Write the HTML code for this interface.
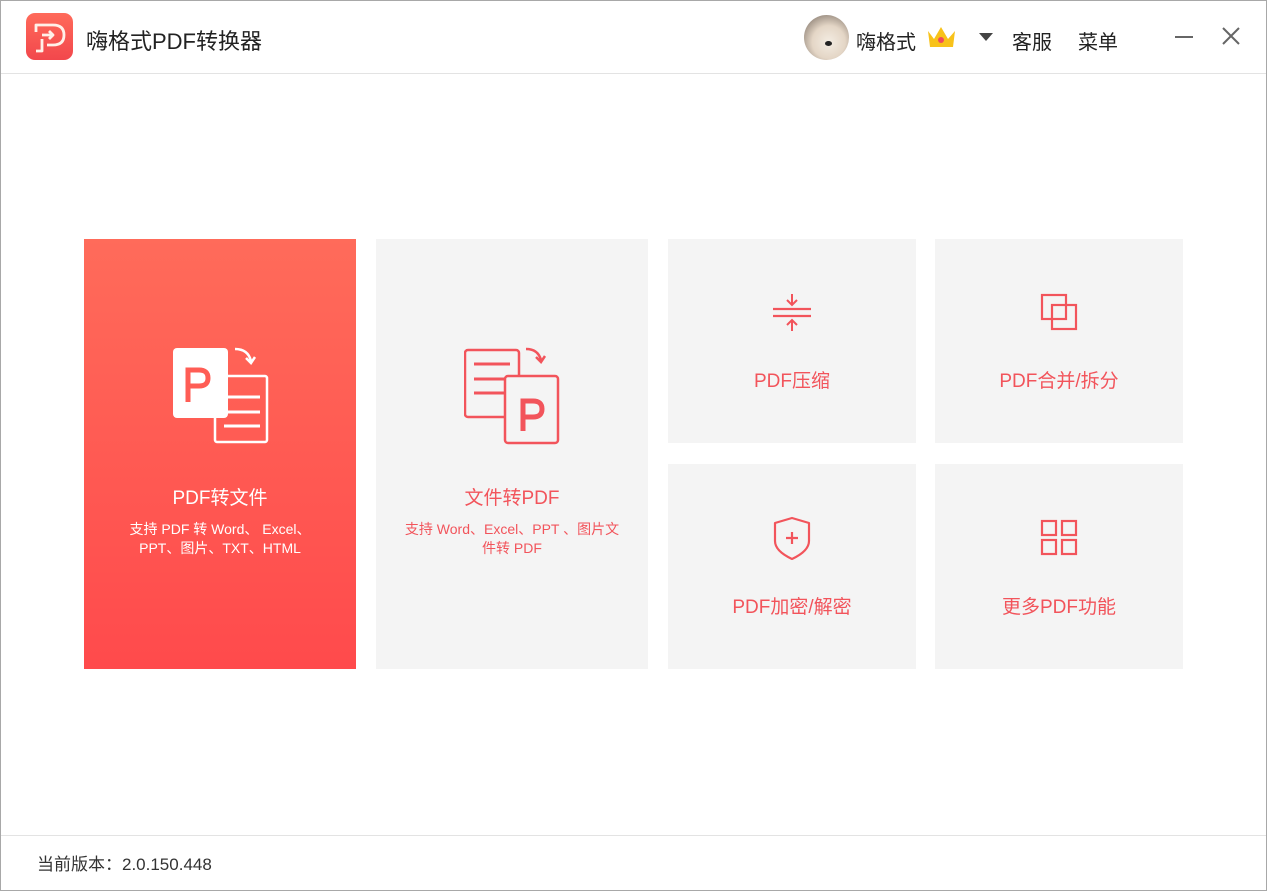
<!DOCTYPE html>
<html><head><meta charset="utf-8"><style>
*{margin:0;padding:0;box-sizing:border-box}
body{width:1267px;height:891px;background:#fff;font-family:"Liberation Sans","Noto Sans CJK SC",sans-serif;position:relative;overflow:hidden}
.frame{position:absolute;left:0;top:0;width:1267px;height:891px;border:1px solid #a8a8a8}
.hline{position:absolute;left:1px;right:1px;height:1px;background:#e3e3e3}
.card{position:absolute;background:#f4f4f4;color:#f2545b;text-align:center}
.t{position:absolute;left:0;right:0;font-size:19px}
.abs{position:absolute}
</style></head><body>
<div class="frame"></div>
<div class="abs" style="left:26px;top:13px;width:47px;height:47px;border-radius:9px;background:linear-gradient(#ff6a5a,#f2474c)">
<svg width="47" height="47" viewBox="0 0 47 47"><path d="M10 19 L10 12 L27 12 Q38 12 38 22 Q38 32 27 32 L21 32 M16 22 L27 22 M23 18 L27 22 L23 26 M16 26 L16 38 L10 38" fill="none" stroke="#fff0e8" stroke-width="2.8" stroke-linejoin="round"/></svg></div>
<div class="abs" style="left:86px;top:24px;font-size:22px;color:#222">嗨格式PDF转换器</div>
<div class="abs" style="left:804px;top:15px;width:45px;height:45px;border-radius:50%;background:radial-gradient(circle at 55% 60%,#f3ece2 0,#e4d6c6 45%,#6a5e55 100%)"></div>
<div class="abs" style="left:825px;top:41px;width:7px;height:5px;border-radius:50%;background:#222"></div>
<div class="abs" style="left:856px;top:26px;font-size:20px;color:#222">嗨格式</div>
<svg class="abs" style="left:925px;top:25px" width="33" height="24" viewBox="0 0 33 24"><path d="M3 6 L9 14 L16 2 L23 14 L30 6 L28 22 L5 22 Z" fill="#f8c21a"/><circle cx="16" cy="15" r="3" fill="#f04b5c"/></svg>
<svg class="abs" style="left:979px;top:33px" width="14" height="9"><path d="M0 0 L14 0 L7 8Z" fill="#444"/></svg>
<div class="abs" style="left:1012px;top:26px;font-size:20px;color:#222">客服</div>
<div class="abs" style="left:1078px;top:26px;font-size:20px;color:#222">菜单</div>
<div class="abs" style="left:1175px;top:36px;width:18px;height:2px;background:#666"></div>
<svg class="abs" style="left:1222px;top:27px" width="18" height="18"><path d="M1 1L17 17M17 1L1 17" stroke="#666" stroke-width="2"/></svg>
<div class="hline" style="top:73px"></div>
<div class="card" style="left:84px;top:239px;width:272px;height:430px;background:linear-gradient(#ff6b5a,#ff4a4c);color:#fff">
<svg class="abs" style="left:88px;top:108px" width="100" height="100" viewBox="0 0 100 100"><rect x="43" y="29" width="52" height="66" rx="2" fill="none" stroke="#fff" stroke-width="2.5"/><line x1="52" y1="50" x2="88" y2="50" stroke="#fff" stroke-width="3"/><line x1="52" y1="65" x2="88" y2="65" stroke="#fff" stroke-width="3"/><line x1="52" y1="79" x2="88" y2="79" stroke="#fff" stroke-width="3"/><rect x="1" y="1" width="55" height="70" rx="4" fill="#fff"/><path d="M16 55 L16 23 L27 23 Q36 23 36 31 Q36 39 27 39 L16 39" fill="none" stroke="#ff5d55" stroke-width="5"/><path d="M63 2 Q76 2 79 14 M74 11 L79 16 L83 10" fill="none" stroke="#fff" stroke-width="2.5"/></svg>
<div class="t" style="top:244px;color:#fff">PDF转文件</div>
<div class="abs" style="left:-10px;right:-10px;top:281px;font-size:14px;line-height:19px">支持 PDF 转 Word、 Excel、<br>PPT、图片、TXT、HTML</div>
</div>
<div class="card" style="left:376px;top:239px;width:272px;height:430px">
<svg class="abs" style="left:88px;top:108px" width="100" height="100" viewBox="0 0 100 100"><rect x="1" y="3" width="54" height="67" rx="3" fill="#f4f4f4" stroke="#f2545b" stroke-width="2.5"/><line x1="10" y1="17" x2="46" y2="17" stroke="#f2545b" stroke-width="3"/><line x1="10" y1="32" x2="46" y2="32" stroke="#f2545b" stroke-width="3"/><line x1="10" y1="46" x2="46" y2="46" stroke="#f2545b" stroke-width="3"/><rect x="41" y="29" width="53" height="67" rx="3" fill="#f4f4f4" stroke="#f2545b" stroke-width="2.5"/><path d="M59 84 L59 54 L69 54 Q78 54 78 62 Q78 70 69 70 L59 70" fill="none" stroke="#f2545b" stroke-width="5"/><path d="M62 2 Q74 2 77 13 M72 10 L77 15 L81 9" fill="none" stroke="#f2545b" stroke-width="2.5"/></svg>
<div class="t" style="top:244px">文件转PDF</div>
<div class="abs" style="left:-10px;right:-10px;top:281px;font-size:14px;line-height:19px">支持 Word、Excel、PPT 、图片文<br>件转 PDF</div>
</div>
<div class="card" style="left:668px;top:239px;width:248px;height:204px">
<svg class="abs" style="left:104px;top:55px" width="40" height="40" viewBox="0 0 40 40"><line x1="1" y1="15" x2="39" y2="15" stroke="#f2545b" stroke-width="2.2"/><line x1="1" y1="22" x2="39" y2="22" stroke="#f2545b" stroke-width="2.2"/><path d="M20 0 L20 11 M15 6 L20 11 L25 6 M20 37 L20 26 M15 31 L20 26 L25 31" fill="none" stroke="#f2545b" stroke-width="2"/></svg>
<div class="t" style="top:127px">PDF压缩</div></div>
<div class="card" style="left:935px;top:239px;width:248px;height:204px">
<svg class="abs" style="left:105px;top:54px" width="40" height="40" viewBox="0 0 40 40"><rect x="2" y="2" width="24" height="24" fill="none" stroke="#f2545b" stroke-width="2.2"/><rect x="12" y="12" width="24" height="24" fill="none" stroke="#f2545b" stroke-width="2.2"/></svg>
<div class="t" style="top:127px">PDF合并/拆分</div></div>
<div class="card" style="left:668px;top:464px;width:248px;height:205px">
<svg class="abs" style="left:104px;top:52px" width="40" height="44" viewBox="0 0 40 44"><path d="M3 7 L20 2 L37 7 L37 25 Q37 35 20 43 Q3 35 3 25 Z" fill="none" stroke="#f2545b" stroke-width="2.2" stroke-linejoin="round"/><path d="M20 16 L20 28 M14 22 L26 22" stroke="#f2545b" stroke-width="2.2"/></svg>
<div class="t" style="top:128px">PDF加密/解密</div></div>
<div class="card" style="left:935px;top:464px;width:248px;height:205px">
<svg class="abs" style="left:105px;top:54px" width="40" height="40" viewBox="0 0 40 40"><g fill="none" stroke="#f2545b" stroke-width="2.2"><rect x="2" y="3" width="14" height="14"/><rect x="22" y="3" width="14" height="14"/><rect x="2" y="22" width="14" height="14"/><rect x="22" y="22" width="14" height="14"/></g></svg>
<div class="t" style="top:128px">更多PDF功能</div></div>
<div class="hline" style="top:835px"></div>
<div class="abs" style="left:37px;top:850px;font-size:17px;color:#333">当前版本：2.0.150.448</div>
</body></html>
